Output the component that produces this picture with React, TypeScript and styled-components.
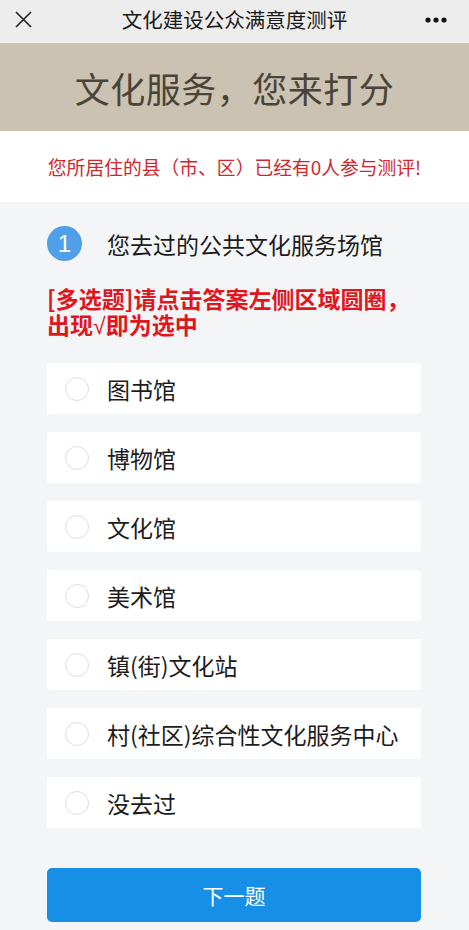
import React from "react";
import styled, { createGlobalStyle } from "styled-components";

const GlobalStyle = createGlobalStyle`
  html, body {
    margin: 0;
    padding: 0;
    background: #f4f5f7;
  }
  body {
    font-family: "Noto Sans CJK SC", "Noto Sans", sans-serif;
  }
  * { box-sizing: border-box; }
`;

const Page = styled.div`
  width: 469px;
  min-height: 930px;
  background: #f4f5f7;
  display: flex;
  flex-direction: column;
`;

const NavBar = styled.div`
  height: 43px;
  background: #ededed;
  display: grid;
  grid-template-columns: 60px 1fr 60px;
  align-items: center;
`;

const NavIcon = styled.div<{ $align: "left" | "right" }>`
  display: flex;
  justify-content: ${(p) => (p.$align === "left" ? "flex-start" : "flex-end")};
  padding: ${(p) => (p.$align === "left" ? "0 0 4px 15px" : "0 22px 4px 0")};
`;

const NavTitle = styled.div`
  text-align: center;
  font-size: 20.5px;
  color: #1a1a1a;
  line-height: 1;
  padding-bottom: 4px;
`;

const Banner = styled.div`
  height: 88px;
  background: #cbc2b2;
  display: flex;
  align-items: center;
  justify-content: center;
  font-size: 35px;
  color: #4a4438;
  letter-spacing: 0.5px;
`;

const Notice = styled.div`
  height: 71px;
  background: #ffffff;
  display: flex;
  align-items: center;
  justify-content: center;
  font-size: 18.8px;
  color: #d1262c;
`;

const Body = styled.div`
  padding: 24px 48px 0 47px;
  display: flex;
  flex-direction: column;
`;

const QuestionRow = styled.div`
  display: flex;
  align-items: center;
  gap: 25px;
`;

const NumBadge = styled.div`
  width: 35px;
  height: 35px;
  border-radius: 50%;
  background: #4f9fe9;
  color: #ffffff;
  font-family: "Liberation Sans", sans-serif;
  font-size: 24px;
  display: flex;
  align-items: center;
  justify-content: center;
  line-height: 1;
`;

const QuestionText = styled.div`
  font-size: 23px;
  color: #1c1c1c;
`;

const Instruction = styled.div`
  margin-top: 24px;
  font-size: 23px;
  line-height: 26px;
  font-weight: 700;
  color: #e0161f;
`;

const Check = styled.span`
  font-family: "Liberation Sans", sans-serif;
  font-weight: 400;
`;

const Options = styled.div`
  margin-top: 24px;
  display: flex;
  flex-direction: column;
  gap: 18px;
`;

const OptionCard = styled.div`
  height: 51px;
  background: #ffffff;
  border-radius: 3px;
  display: flex;
  align-items: center;
  padding-left: 18px;
  gap: 18px;
`;

const Radio = styled.span`
  width: 24px;
  height: 24px;
  border-radius: 50%;
  border: 1px solid #dedede;
  background: #ffffff;
  flex: none;
`;

const OptionLabel = styled.span`
  font-size: 23px;
  color: #1c1c1c;
  white-space: nowrap;
`;

const NextButton = styled.button`
  margin-top: 40px;
  height: 54px;
  width: 100%;
  border: none;
  border-radius: 5px;
  background: #178fe6;
  color: #ffffff;
  font-family: "Noto Sans CJK SC", sans-serif;
  font-size: 21px;
  cursor: pointer;
`;

const options = [
  "图书馆",
  "博物馆",
  "文化馆",
  "美术馆",
  "镇(街)文化站",
  "村(社区)综合性文化服务中心",
  "没去过",
];

export default function App() {
  return (
    <Page>
      <GlobalStyle />
      <NavBar>
        <NavIcon $align="left">
          <svg width="17" height="17" viewBox="0 0 17 17">
            <path d="M1 1 L16 16 M16 1 L1 16" stroke="#222" strokeWidth="1.6" fill="none" />
          </svg>
        </NavIcon>
        <NavTitle>文化建设公众满意度测评</NavTitle>
        <NavIcon $align="right">
          <svg width="22" height="6" viewBox="0 0 22 6">
            <circle cx="3" cy="3" r="2.6" fill="#111" />
            <circle cx="11" cy="3" r="2.6" fill="#111" />
            <circle cx="19" cy="3" r="2.6" fill="#111" />
          </svg>
        </NavIcon>
      </NavBar>
      <Banner>文化服务，您来打分</Banner>
      <Notice>您所居住的县（市、区）已经有0人参与测评!</Notice>
      <Body>
        <QuestionRow>
          <NumBadge>1</NumBadge>
          <QuestionText>您去过的公共文化服务场馆</QuestionText>
        </QuestionRow>
        <Instruction>
          [多选题]请点击答案左侧区域圆圈，
          <br />
          出现<Check>√</Check>即为选中
        </Instruction>
        <Options>
          {options.map((o) => (
            <OptionCard key={o}>
              <Radio />
              <OptionLabel>{o}</OptionLabel>
            </OptionCard>
          ))}
        </Options>
        <NextButton>下一题</NextButton>
      </Body>
    </Page>
  );
}
